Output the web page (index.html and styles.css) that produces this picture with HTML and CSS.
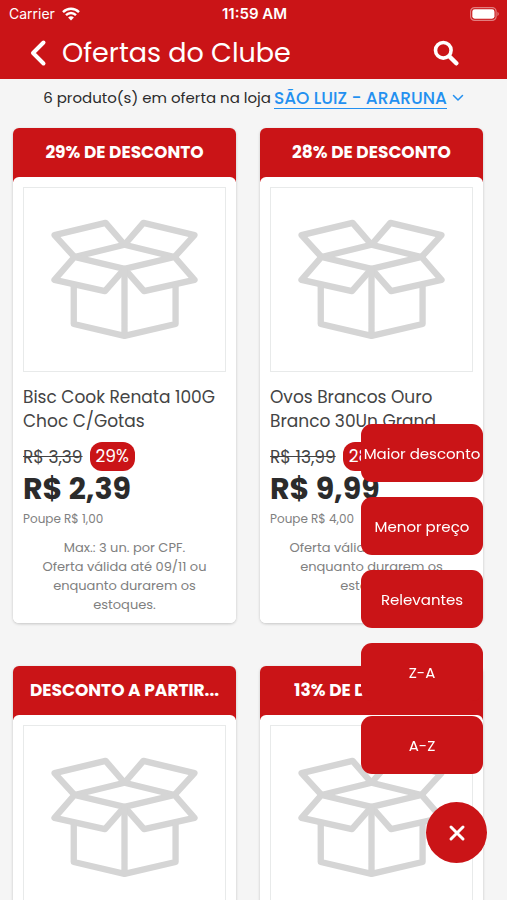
FILE: index.html
```html
<!DOCTYPE html>
<html lang="pt-BR">
<head>
<meta charset="utf-8">
<meta name="viewport" content="width=device-width, initial-scale=1">
<title>Ofertas do Clube</title>
<link rel="stylesheet" href="styles.css">
</head>
<body>
<svg class="defs" aria-hidden="true">
  <symbol id="box" viewBox="70 202 606 552">
    <g fill="none" stroke="currentColor" stroke-width="19" stroke-linejoin="round" stroke-linecap="butt">
      <path d="M373 373 316 307 162 344 222 410Z"/>
      <path d="M373 373 430 307 584 344 524 410Z"/>
      <path d="M222 410 162 479 314 513 373 446Z"/>
      <path d="M524 410 584 479 432 513 373 446Z"/>
      <path d="M220 494V612L373 648 527 612V494M373 448V648"/>
    </g>
  </symbol>
</svg>
<div class="app">
  <header class="top">
    <div class="status">
      <div class="carrier">
        <span>Carrier</span>
        <svg width="18" height="14" viewBox="0 0 18 14" aria-hidden="true">
          <g fill="none" stroke="#fff" stroke-width="2.4"><path d="M1 5.1C5.5.6 12.500.6 17 5.100"/><path d="M4 8.200C6.900 5.300 11.100 5.300 14 8.200"/></g>
          <path fill="#fff" d="M6.100 10.400Q9 8 11.900 10.400L9 13.500Z"/>
        </svg>
      </div>
      <time class="clock">11:59 AM</time>
      <svg class="battery" width="30" height="14" viewBox="0 0 30 14" aria-hidden="true">
        <rect x=".6" y=".6" width="25.500" height="12.800" rx="4" fill="none" stroke="#fff" stroke-opacity=".45" stroke-width="1.200"/>
        <rect x="2.300" y="2.300" width="22.200" height="9.400" rx="2.400" fill="#fff"/>
        <path d="M27.500 4.800Q30 7 27.500 9.200Z" fill="#fff" fill-opacity=".5"/>
      </svg>
    </div>
    <div class="nav">
      <button class="icon-btn" aria-label="Voltar">
        <svg width="18" height="28" viewBox="0 0 18 28" aria-hidden="true"><path d="M14.500 3.500 4 14 14.500 24.500" fill="none" stroke="#fff" stroke-width="4" stroke-linecap="round" stroke-linejoin="round"/></svg>
      </button>
      <h1>Ofertas do Clube</h1>
      <button class="icon-btn" aria-label="Buscar">
        <svg width="26" height="26" viewBox="0 0 26 26" aria-hidden="true"><circle cx="10.300" cy="10.300" r="7.800" fill="none" stroke="#fff" stroke-width="3.600"/><path d="M16.500 16.500 23.300 23.300" stroke="#fff" stroke-width="4.400" stroke-linecap="round"/></svg>
      </button>
    </div>
  </header>
  <main>
    <p class="summary">6 produto(s) em oferta na loja <a href="#loja">SÃO LUIZ - ARARUNA</a>
      <svg width="12" height="8" viewBox="0 0 12 8" aria-hidden="true"><path d="M1.500 1.500 6 6 10.500 1.500" fill="none" stroke="#2390f0" stroke-width="1.500" stroke-linecap="round" stroke-linejoin="round"/></svg>
    </p>
    <section class="products">
      <article class="card">
        <div class="ribbon"><span>29% DE DESCONTO</span></div>
        <div class="body">
          <svg class="photo" viewBox="0 0 606 552" aria-hidden="true"><use href="#box"/></svg>
          <h2>Bisc Cook Renata 100G Choc C/Gotas</h2>
          <div class="was"><s>R$ 3,39</s><span class="badge">29%</span></div>
          <strong class="price">R$ 2,39</strong>
          <p class="save">Poupe R$ 1,00</p>
          <p class="terms">Max.: 3 un. por CPF.<br>Oferta válida até 09/11 ou enquanto durarem os estoques.</p>
        </div>
      </article>
      <article class="card">
        <div class="ribbon"><span>28% DE DESCONTO</span></div>
        <div class="body">
          <svg class="photo" viewBox="0 0 606 552" aria-hidden="true"><use href="#box"/></svg>
          <h2>Ovos Brancos Ouro Branco 30Un Grand</h2>
          <div class="was"><s>R$ 13,99</s><span class="badge">28%</span></div>
          <strong class="price">R$ 9,99</strong>
          <p class="save">Poupe R$ 4,00</p>
          <p class="terms">Oferta válida até 09/11 ou enquanto durarem os estoques.</p>
        </div>
      </article>
      <article class="card">
        <div class="ribbon"><span>DESCONTO A PARTIR...</span></div>
        <div class="body">
          <svg class="photo" viewBox="0 0 606 552" aria-hidden="true"><use href="#box"/></svg>
        </div>
      </article>
      <article class="card">
        <div class="ribbon"><span>13% DE DESCONTO</span></div>
        <div class="body">
          <svg class="photo" viewBox="0 0 606 552" aria-hidden="true"><use href="#box"/></svg>
        </div>
      </article>
    </section>
  </main>
  <div class="sort">
    <div class="options">
      <button>Maior desconto</button>
      <button>Menor preço</button>
      <button>Relevantes</button>
      <button>Z-A</button>
      <button>A-Z</button>
    </div>
    <button class="close" aria-label="Fechar">
      <svg width="18" height="18" viewBox="0 0 18 18" aria-hidden="true"><path d="M3 3 15 15M15 3 3 15" stroke="#fff" stroke-width="3" stroke-linecap="round"/></svg>
    </button>
  </div>
</div>
</body>
</html>
```
FILE: styles.css
```css
:root {
  --red: #ca1417;
  --page: #f5f5f5;
}

* {
  box-sizing: border-box;
  margin: 0;
}

body {
  background: var(--page);
  color: #2b2b2b;
  font-family: Poppins, Inter, sans-serif;
}

button {
  border: 0;
  padding: 0;
  font-family: inherit;
  color: #fff;
  background: var(--red);
  cursor: pointer;
}

svg {
  flex: none;
}

.defs {
  display: none;
}

.app {
  height: 100vh;
  overflow: hidden;
}

.top {
  background: var(--red);
  color: #fff;
}

.status {
  display: grid;
  grid-template-columns: 1fr auto 1fr;
  align-items: center;
  height: 27px;
  padding: 0 7px 0 9px;
  font-family: Inter, sans-serif;
  font-size: 14px;
}

.carrier {
  display: flex;
  align-items: center;
  gap: 7px;
}

.clock {
  font-size: 15px;
  font-weight: 600;
}

.battery {
  justify-self: end;
}

.nav {
  display: flex;
  align-items: center;
  height: 52px;
  padding: 0 48px 0 29px;
}

.nav h1 {
  flex: 1;
  padding-left: 15px;
  font-size: 27px;
  font-weight: 400;
}

.icon-btn {
  display: flex;
}

.summary {
  display: flex;
  align-items: center;
  justify-content: center;
  gap: 3px;
  padding: 7px 0 9px;
  line-height: 24px;
  font-size: 15px;
}

.summary a {
  font-size: 17px;
  font-weight: 500;
  line-height: 20px;
  color: #2390f0;
  text-decoration: none;
  border-bottom: 1px solid;
}

.summary svg {
  margin-left: 2px;
}

.products {
  display: grid;
  grid-template-columns: 1fr 1fr;
  gap: 43px 24px;
  padding: 9px 24px 0 13px;
}

.card {
  display: flex;
  flex-direction: column;
  border-radius: 6px;
  background: linear-gradient(var(--red) 54px, #fff 54px);
  box-shadow: 0 1px 3px rgba(0, 0, 0, 0.2);
}

.ribbon {
  padding: 0 16px;
  color: #fff;
  font-size: 17px;
  font-weight: 700;
  line-height: 49px;
  text-align: center;
  white-space: nowrap;
}

.body {
  flex: 1;
  display: flex;
  flex-direction: column;
  padding: 10px 10px 9px;
  border-radius: 6px;
  background: #fff;
}

.photo {
  width: 100%;
  border: 1px solid #e8eaea;
  color: #d5d5d5;
}

.body h2 {
  margin-top: 13px;
  font-size: 17px;
  font-weight: 400;
  line-height: 24px;
  color: #444;
}

.was {
  display: flex;
  align-items: center;
  gap: 7px;
  margin-top: 9px;
  font-size: 17px;
  color: #444;
}

.badge {
  padding: 0 6px;
  border-radius: 12px;
  background: var(--red);
  color: #fff;
  line-height: 29px;
}

.price {
  font-size: 30px;
  font-weight: 700;
  line-height: 36px;
}

.save {
  margin-top: 2px;
  font-size: 12px;
  line-height: 20px;
  color: #808080;
}

.terms {
  margin-top: 9px;
  padding: 0 12px;
  font-size: 13px;
  line-height: 19px;
  text-align: center;
  color: #808080;
}

.sort {
  position: fixed;
  right: 20px;
  bottom: 37px;
  display: flex;
  flex-direction: column;
  align-items: flex-end;
  gap: 28px;
}

.options {
  display: flex;
  flex-direction: column;
  gap: 15px;
  margin-right: 4px;
}

.options button {
  width: 122px;
  height: 58px;
  border-radius: 11px;
  font-size: 15px;
  white-space: nowrap;
}

.close {
  display: flex;
  align-items: center;
  justify-content: center;
  width: 61px;
  height: 61px;
  border-radius: 50%;
}
```
